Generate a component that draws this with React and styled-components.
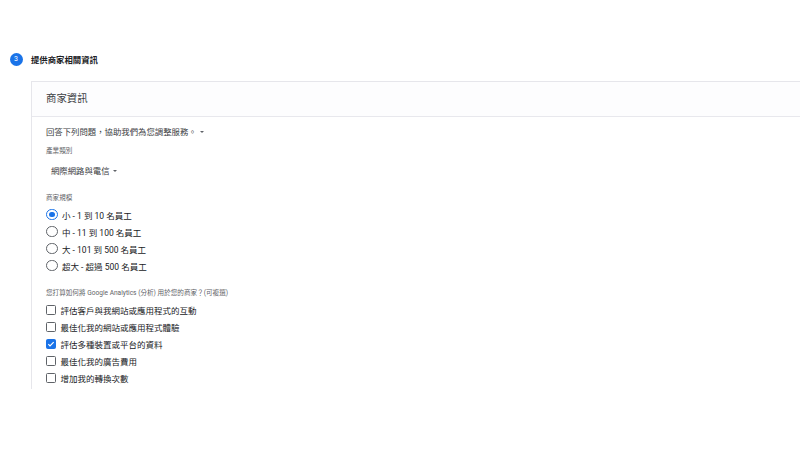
import React from 'react';
import styled, { createGlobalStyle } from 'styled-components';

const GlobalStyle = createGlobalStyle`
    html, body {
        margin: 0;
        padding: 0;
        background: #ffffff;
    }
    body {
        font-family: Roboto, "Noto Sans CJK TC", "Noto Sans", sans-serif;
        color: #202124;
    }
`;

const sizes = [
    { name: '小', range: '1 到 10 名員工' },
    { name: '中', range: '11 到 100 名員工' },
    { name: '大', range: '101 到 500 名員工' },
    { name: '超大', range: '超過 500 名員工' },
];

const uses = [
    { label: '評估客戶與我網站或應用程式的互動', checked: false },
    { label: '最佳化我的網站或應用程式體驗', checked: false },
    { label: '評估多種裝置或平台的資料', checked: true },
    { label: '最佳化我的廣告費用', checked: false },
    { label: '增加我的轉換次數', checked: false },
];

const App = () => {
    return <Page>
        <GlobalStyle />
        <StepHeader>
            <StepNumber>3</StepNumber>
            <StepTitle>提供商家相關資訊</StepTitle>
        </StepHeader>
        <Card>
            <CardHeader>商家資訊</CardHeader>
            <CardBody>
                <Intro>回答下列問題，協助我們為您調整服務。<Caret /></Intro>
                <FieldLabel top={8}>產業類別</FieldLabel>
                <Dropdown>網際網路與電信<Caret /></Dropdown>
                <FieldLabel top={16}>商家規模</FieldLabel>
                <OptionList top={3}>
                    {sizes.map((s, i) => (
                        <OptionRow key={s.name}>
                            <Radio selected={i === 0} />
                            <OptionText>{s.name} - {s.range}</OptionText>
                        </OptionRow>
                    ))}
                </OptionList>
                <FieldLabel top={13.5}>您打算如何將 Google Analytics (分析) 用於您的商家？(可複選)</FieldLabel>
                <OptionList top={4}>
                    {uses.map((u) => (
                        <OptionRow key={u.label}>
                            <Checkbox checked={u.checked}>
                                {u.checked && (
                                    <svg width="8" height="8" viewBox="0 0 24 24">
                                        <path d="M4 12.5l5 5L20 6.5" fill="none" stroke="#fff" strokeWidth="3.6" />
                                    </svg>
                                )}
                            </Checkbox>
                            <OptionText>{u.label}</OptionText>
                        </OptionRow>
                    ))}
                </OptionList>
            </CardBody>
        </Card>
    </Page>
};

const Page = styled.div`
    width: 800px;
    height: 450px;
    overflow: hidden;
    padding-top: 52px;
    box-sizing: border-box;
`;

const StepHeader = styled.div`
    display: flex;
    align-items: center;
    padding-left: 9.5px;
    height: 14px;
`;

const StepNumber = styled.div`
    width: 13px;
    height: 13px;
    border-radius: 50%;
    background: #1a73e8;
    color: #fff;
    font-size: 7px;
    display: flex;
    align-items: center;
    justify-content: center;
`;

const StepTitle = styled.div`
    margin-left: 8.5px;
    font-size: 8.4px;
    font-weight: 700;
    color: #202124;
`;

const Card = styled.div`
    margin: 15px 0 0 31px;
    width: 800px;
    border-top: 1px solid #e6e6eb;
    border-left: 1px solid #e6e6eb;
    padding-bottom: 2px;
`;

const CardHeader = styled.div`
    height: 34px;
    line-height: 34px;
    padding-left: 14px;
    font-size: 10.4px;
    color: #3c4043;
    background: #fdfdfe;
    border-bottom: 1px solid #e8e8ed;
`;

const CardBody = styled.div`
    padding: 0 14px;
`;

const Intro = styled.div`
    margin-top: 9px;
    line-height: 12px;
    font-size: 8.4px;
    color: #3c4043;
    display: flex;
    align-items: center;
`;

const Caret = styled.span`
    display: inline-block;
    margin-left: 3px;
    width: 0;
    height: 0;
    border-left: 2.5px solid transparent;
    border-right: 2.5px solid transparent;
    border-top: 2.5px solid #5f6368;
`;

const FieldLabel = styled.div`
    margin-top: ${(p) => p.top}px;
    line-height: 10px;
    font-size: 6.6px;
    color: #5f6368;
`;

const Dropdown = styled.div`
    margin-top: 9px;
    padding-left: 5px;
    line-height: 12px;
    font-size: 8.4px;
    color: #3c4043;
    display: flex;
    align-items: center;
`;

const OptionList = styled.div`
    margin-top: ${(p) => p.top}px;
    display: flex;
    flex-direction: column;
`;

const OptionRow = styled.div`
    height: 17px;
    display: flex;
    align-items: center;
`;

const Radio = styled.span`
    width: 11.5px;
    height: 11.5px;
    box-sizing: border-box;
    border-radius: 50%;
    border: 1.5px solid ${(p) => (p.selected ? '#1a73e8' : '#5f6368')};
    display: flex;
    align-items: center;
    justify-content: center;
    margin-right: 4.5px;
    flex-shrink: 0;

    &::after {
        content: '';
        width: 5.5px;
        height: 5.5px;
        border-radius: 50%;
        background: ${(p) => (p.selected ? '#1a73e8' : 'transparent')};
    }
`;

const Checkbox = styled.span`
    width: 10px;
    height: 10px;
    box-sizing: border-box;
    border-radius: 1.5px;
    border: 1.5px solid ${(p) => (p.checked ? '#1a73e8' : '#5f6368')};
    background: ${(p) => (p.checked ? '#1a73e8' : 'transparent')};
    display: flex;
    align-items: center;
    justify-content: center;
    margin-right: 4.5px;
    flex-shrink: 0;
`;

const OptionText = styled.span`
    font-size: 8.5px;
    color: #202124;
`;

export default App;
